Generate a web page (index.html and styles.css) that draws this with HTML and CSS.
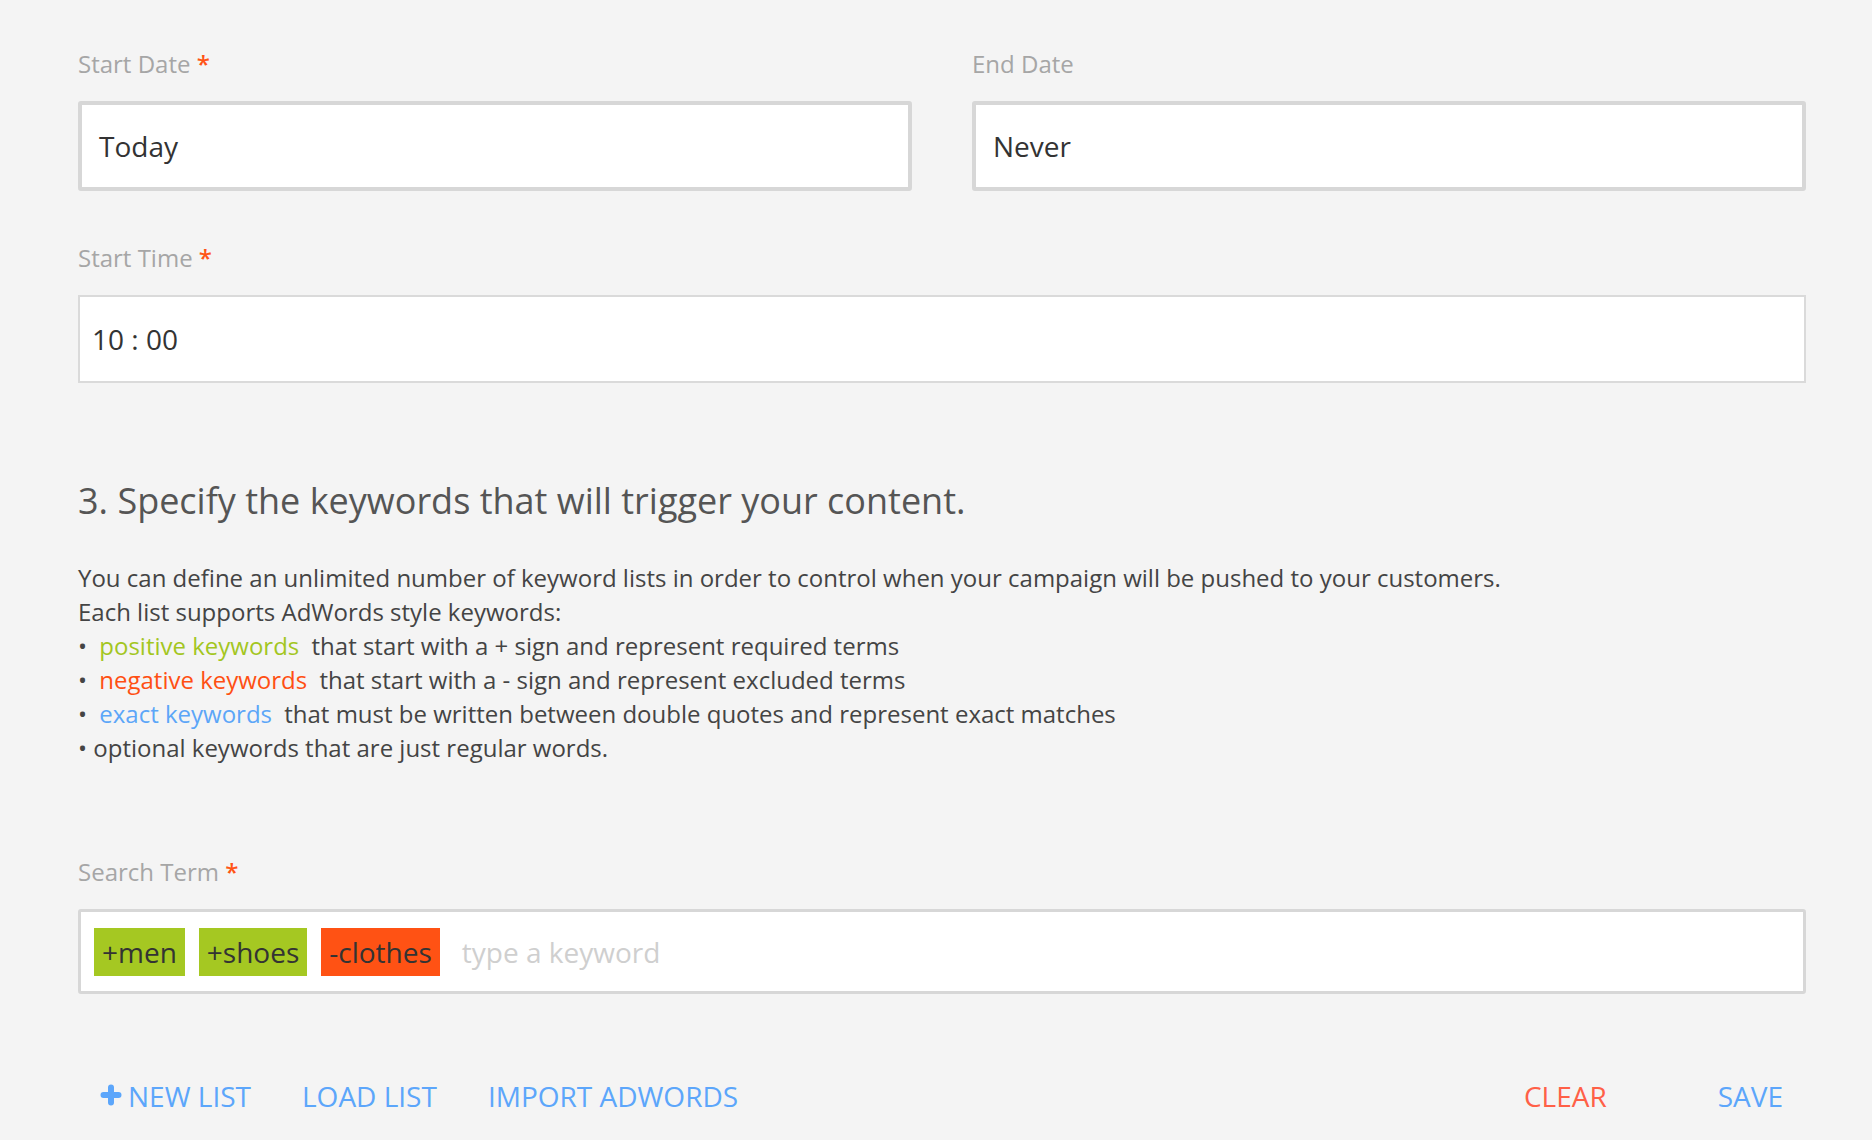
FILE: index.html
```html
<!DOCTYPE html>
<html lang="en">
<head>
<meta charset="utf-8">
<title>Campaign keywords</title>
<link rel="stylesheet" href="styles.css">
</head>
<body>
<main class="page">
  <div class="date-row">
    <div class="field">
      <div class="label">Start Date <span class="req">*</span></div>
      <div class="box box-date">Today</div>
    </div>
    <div class="field">
      <div class="label">End Date</div>
      <div class="box box-date">Never</div>
    </div>
  </div>

  <div class="field field-time">
    <div class="label">Start Time <span class="req">*</span></div>
    <div class="box box-time">10 : 00</div>
  </div>

  <h2 class="heading">3. Specify the keywords that will trigger your content.</h2>

  <div class="desc">
    <p>You can define an unlimited number of keyword lists in order to control when your campaign will be pushed to your customers.</p>
    <p>Each list supports AdWords style keywords:</p>
    <p>• <span class="kw kw-pos">positive keywords</span> that start with a + sign and represent required terms</p>
    <p>• <span class="kw kw-neg">negative keywords</span> that start with a - sign and represent excluded terms</p>
    <p>• <span class="kw kw-exact">exact keywords</span> that must be written between double quotes and represent exact matches</p>
    <p>• optional keywords that are just regular words.</p>
  </div>

  <div class="field field-search">
    <div class="label">Search Term <span class="req">*</span></div>
    <div class="box box-search">
      <span class="tag tag-pos">+men</span>
      <span class="tag tag-pos">+shoes</span>
      <span class="tag tag-neg">-clothes</span>
      <span class="placeholder">type a keyword</span>
    </div>
  </div>

  <div class="actions">
    <div class="actions-left">
      <a class="btn btn-blue btn-new"><svg class="plus" width="22" height="22" viewBox="0 0 22 22"><path d="M11 3.5V18.5M3.5 11H18.5" stroke="#5ca6fb" stroke-width="6" stroke-linecap="round"/></svg>NEW LIST</a>
      <a class="btn btn-blue">LOAD LIST</a>
      <a class="btn btn-blue">IMPORT ADWORDS</a>
    </div>
    <div class="actions-right">
      <a class="btn btn-red">CLEAR</a>
      <a class="btn btn-blue">SAVE</a>
    </div>
  </div>
</main>
</body>
</html>
```

FILE: styles.css
```css
html, body {
  margin: 0;
  padding: 0;
  background: #f4f4f4;
}

body {
  font-family: "Open Sans", "Noto Sans", "Liberation Sans", sans-serif;
  color: #444;
}

.page {
  width: 1728px;
  padding: 46px 0 0 78px;
  box-sizing: content-box;
}

.date-row {
  display: grid;
  grid-template-columns: 1fr 1fr;
  column-gap: 60px;
}

.label {
  font-size: 24px;
  line-height: 34px;
  padding-top: 1px;
  color: #a6a6a6;
  margin-bottom: 20px;
}

.req {
  color: #ff5416;
  font-weight: 600;
}

.box {
  background: #fff;
  box-sizing: border-box;
  display: flex;
  align-items: center;
  font-size: 28px;
  color: #333;
}

.box-date {
  height: 90px;
  border: 4px solid #d7d7d7;
  border-radius: 3px;
  padding-left: 17px;
}

.field-time {
  margin-top: 49px;
}

.box-time {
  height: 88px;
  border: 2px solid #dadada;
  padding-left: 12px;
}

.heading {
  margin: 94px 0 0;
  font-size: 36px;
  line-height: 48px;
  font-weight: 400;
  color: #555;
}

.desc {
  margin-top: 36px;
  font-size: 24px;
  line-height: 34px;
  color: #444;
}

.desc p {
  margin: 0;
}

.kw {
  padding: 0 6px 0 6px;
}

.kw-pos { color: #a3c61f; }
.kw-neg { color: #ff4f12; }
.kw-exact { color: #5ca6f8; }

.field-search {
  margin-top: 89px;
}

.box-search {
  height: 85px;
  border: 3px solid #d7d7d7;
  border-radius: 3px;
  padding-left: 13px;
  gap: 14px;
}

.tag {
  height: 48px;
  line-height: 48px;
  padding: 0 8px;
  color: #333;
  font-size: 28px;
}

.tag-pos { background: #a5c822; }
.tag-neg { background: #ff5214; }

.placeholder {
  color: #cfcfcf;
  margin-left: 8px;
}

.actions {
  margin-top: 82px;
  display: flex;
  justify-content: space-between;
  font-size: 28px;
  line-height: 40px;
}

.actions-left {
  display: flex;
  gap: 51px;
  padding-left: 22px;
}

.actions-right {
  display: flex;
  gap: 111px;
  padding-right: 23px;
}

.btn {
  display: flex;
  align-items: center;
  cursor: pointer;
}

.btn-blue { color: #5ca6fb; }
.btn-red { color: #ff6047; }

.plus {
  margin-right: 6px;
  margin-top: -2px;
}
```
